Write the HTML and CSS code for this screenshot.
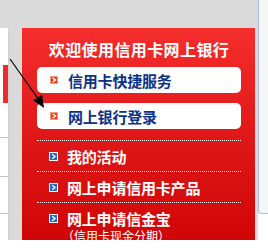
FILE: index.html
```html
<!DOCTYPE html>
<html>
<head>
<meta charset="utf-8">
<link rel="stylesheet" href="styles.css">
</head>
<body>
<div class="screen">
  <div class="main">
    <div class="top"></div>
    <div class="row">
      <div class="strip">
        <div class="strip-red"></div>
        <div class="strip-line l1"></div>
        <div class="strip-line l2"></div>
        <div class="strip-line l3"></div>
      </div>
      <div class="panel">
        <div class="title">欢迎使用信用卡网上银行</div>
        <a class="box">
          <svg class="icon-o" width="8" height="8" viewBox="0 0 8 8"><rect x="0" y="0" width="8" height="8" fill="#e4431c"/><rect x="0.5" y="0.5" width="7" height="7" fill="none" stroke="#f39a7c" stroke-width="1"/><path d="M2.6 1.8 L5.4 4 L2.6 6.2" fill="none" stroke="#fff" stroke-width="1.4"/></svg>
          <span>信用卡快捷服务</span>
        </a>
        <a class="box second">
          <svg class="icon-o" width="8" height="8" viewBox="0 0 8 8"><rect x="0" y="0" width="8" height="8" fill="#e4431c"/><rect x="0.5" y="0.5" width="7" height="7" fill="none" stroke="#f39a7c" stroke-width="1"/><path d="M2.6 1.8 L5.4 4 L2.6 6.2" fill="none" stroke="#fff" stroke-width="1.4"/></svg>
          <span>网上银行登录</span>
        </a>
        <ul class="menu">
          <li class="item">
            <div class="item-row">
              <svg class="icon-b" width="9" height="9" viewBox="0 0 9 9"><rect x="0.5" y="0.5" width="8" height="8" fill="#1b6ccf" stroke="#fff" stroke-width="1"/><path d="M3.2 2.2 L6 4.5 L3.2 6.8" fill="none" stroke="#fff" stroke-width="1.4"/></svg>
              <span>我的活动</span>
            </div>
          </li>
          <li class="item">
            <div class="item-row">
              <svg class="icon-b" width="9" height="9" viewBox="0 0 9 9"><rect x="0.5" y="0.5" width="8" height="8" fill="#1b6ccf" stroke="#fff" stroke-width="1"/><path d="M3.2 2.2 L6 4.5 L3.2 6.8" fill="none" stroke="#fff" stroke-width="1.4"/></svg>
              <span>网上申请信用卡产品</span>
            </div>
          </li>
          <li class="item">
            <div class="item-row">
              <svg class="icon-b" width="9" height="9" viewBox="0 0 9 9"><rect x="0.5" y="0.5" width="8" height="8" fill="#1b6ccf" stroke="#fff" stroke-width="1"/><path d="M3.2 2.2 L6 4.5 L3.2 6.8" fill="none" stroke="#fff" stroke-width="1.4"/></svg>
              <span>网上申请信金宝</span>
            </div>
            <div class="sub">（信用卡现金分期）</div>
          </li>
        </ul>
      </div>
    </div>
    <div class="bottom"></div>
  </div>
  <div class="scroll">
    <div class="track"></div>
  </div>
  <svg class="arrow" width="268" height="248" viewBox="0 0 268 248">
    <path d="M29 95 L34 92.5 L33.5 99 Z" fill="#e8262a"/>
    <line x1="10" y1="59" x2="39" y2="100" stroke="#000" stroke-width="1.2"/>
    <path d="M44 108 L33.5 100.5 L42 94.5 Z" fill="#000"/>
  </svg>
</div>
</body>
</html>
```

FILE: styles.css
```css
* { box-sizing: border-box; }
html, body { margin: 0; padding: 0; }
body {
  width: 268px;
  height: 248px;
  overflow: hidden;
  background: #ffffff;
  font-family: "Noto Sans CJK SC", "Liberation Sans", sans-serif;
}
.screen {
  position: relative;
  display: flex;
  width: 268px;
  height: 248px;
}
.main {
  width: 258px;
  display: flex;
  flex-direction: column;
  background: #dadada;
}
.top { height: 28px; }
.row {
  display: flex;
  height: 212px;
  gap: 13px;
}
.bottom {
  height: 8px;
  background: #ffffff;
}
.strip {
  width: 9px;
  background: #ffffff;
  border-right: 1px solid #d0d0d0;
  display: flex;
  flex-direction: column;
  padding-top: 37px;
}
.strip-red {
  margin-left: 3px;
  width: 5px;
  height: 38px;
  background: #ee2a2a;
}
.strip-line {
  height: 1px;
  background: #c4c4c4;
}
.l1 { margin-top: 34px; }
.l2 { margin-top: 38px; }
.l3 { margin-top: 36px; }
.panel {
  width: 233px;
  height: 212px;
  overflow: hidden;
  background: linear-gradient(#f42d2d, #e01818 50%, #d00606);
  padding: 11px 14px 0 15px;
  color: #ffffff;
}
.title {
  height: 20px;
  line-height: 20px;
  font-size: 16px;
  font-weight: 700;
  letter-spacing: 0.4px;
  text-align: center;
  white-space: nowrap;
}
.box {
  margin-top: 8px;
  height: 26px;
  background: #ffffff;
  border-radius: 5px;
  display: flex;
  align-items: center;
  padding-left: 13px;
  gap: 10px;
  color: #0b3188;
  font-size: 15px;
  font-weight: 700;
  letter-spacing: -0.2px;
  white-space: nowrap;
}
.box.second { margin-top: 10px; }
.icon-o, .icon-b { flex: none; display: block; }
.menu {
  list-style: none;
  margin: 11px 0 0 0;
  padding: 0;
}
.item {
  border-top: 1px dotted #ffffff;
}
.item-row {
  height: 30px;
  display: flex;
  align-items: center;
  padding-left: 12px;
  gap: 9px;
  font-size: 15px;
  font-weight: 700;
  letter-spacing: -0.2px;
  white-space: nowrap;
}
.sub {
  margin-top: -4px;
  padding-left: 25px;
  line-height: 14px;
  font-size: 12px;
  letter-spacing: 0;
  white-space: nowrap;
}
.scroll {
  width: 10px;
  background: #ffffff;
}
.track {
  height: 214px;
  border-left: 1px solid #a8bfe8;
  border-bottom: 1px solid #a8bfe8;
  border-bottom-left-radius: 3px;
  background: #f6f6f6;
}
.arrow {
  position: absolute;
  left: 0;
  top: 0;
  pointer-events: none;
}
```
